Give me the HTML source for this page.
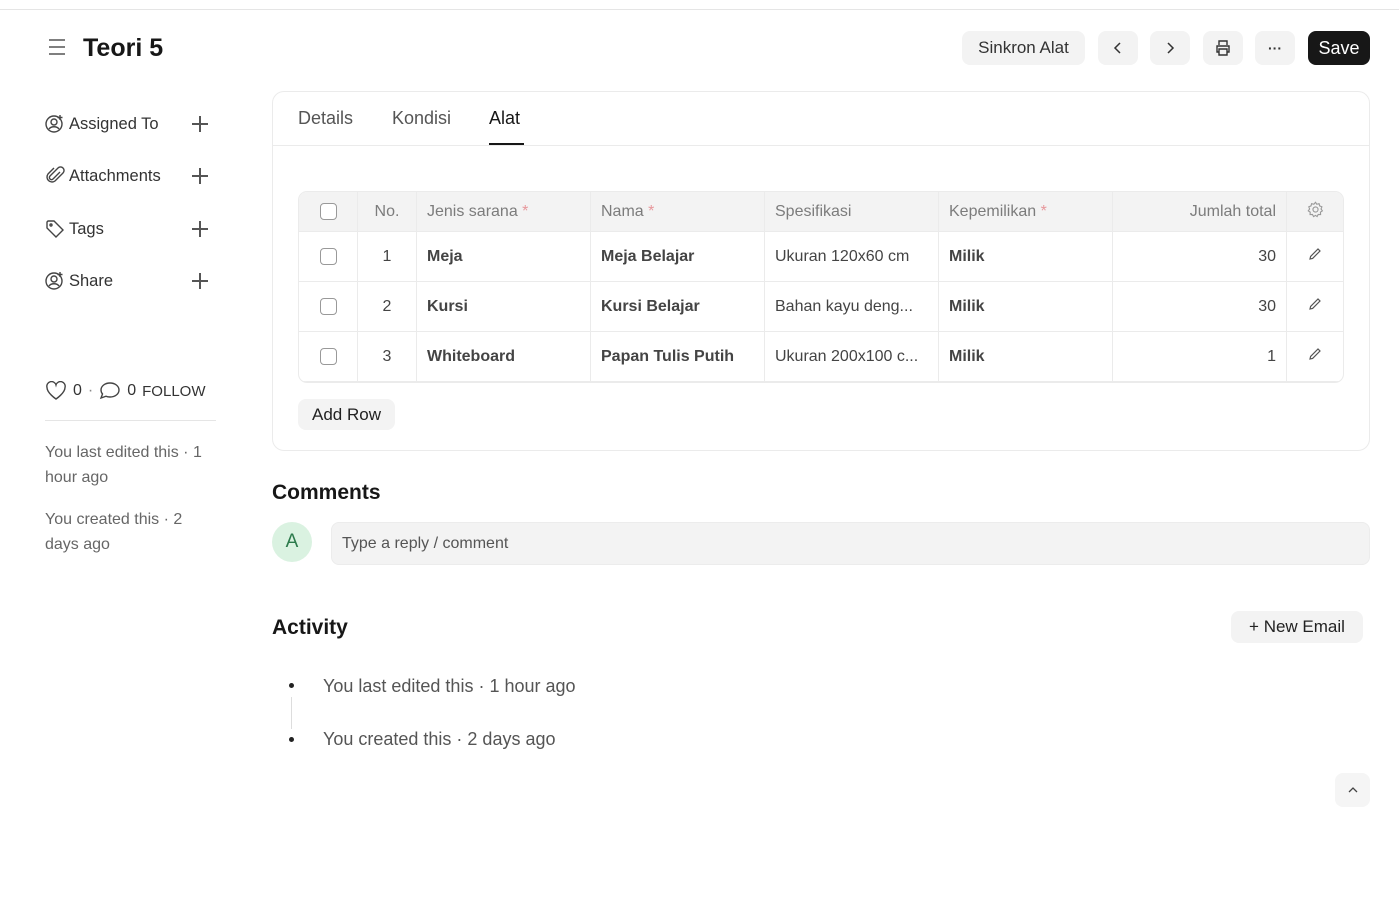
<!DOCTYPE html>
<html><head><meta charset="utf-8">
<style>
*{box-sizing:border-box;margin:0;padding:0}
body{width:1399px;height:902px;position:relative;background:#fff;font-family:"Liberation Sans",sans-serif;color:#171717;overflow:hidden}
.a{position:absolute}
.btn{position:absolute;background:#f3f3f3;border-radius:8px;display:flex;align-items:center;justify-content:center;font-size:17px;color:#333}
.side{position:absolute;left:45px;font-size:16.5px;color:#333;display:flex;align-items:center;gap:4px}
.plus{position:absolute;left:191px;width:18px;height:18px}
.plus:before{content:"";position:absolute;left:8px;top:1px;width:1.5px;height:16px;background:#555}
.plus:after{content:"";position:absolute;top:8px;left:1px;height:1.5px;width:16px;background:#555}
.tw{position:absolute;left:298px;top:191px;width:1046px;height:192px;border:1px solid #ebebeb;border-radius:9px;overflow:hidden}
table{border-collapse:collapse;width:1046px;margin:-1px;font-size:16px}
td,th{border:1px solid #ebebeb;height:50px;padding:0 10px;text-align:left}
th{height:40px;background:#f3f3f3;font-weight:normal;color:#7c7c7c}
td{font-weight:bold;color:#444}
.r{text-align:right}.c{text-align:center}
.cb{display:inline-block;width:17px;height:17px;border:1px solid #999;border-radius:4px;vertical-align:middle;background:#fff}
.req{color:#e7979b}
td.n{font-weight:normal;color:#444}
</style></head><body>
<div class="a" style="left:0;top:9px;width:1399px;height:1px;background:#e5e5e5"></div>
<svg class="a" style="left:48px;top:38px" width="18" height="18" viewBox="0 0 18 18" stroke="#555" stroke-width="1.4"><path d="M1 2h16M1 9h16M1 16h16"/></svg>
<div class="a" style="left:83px;top:34px;font-size:25px;font-weight:bold">Teori 5</div>
<div class="btn" style="left:962px;top:31px;width:123px;height:34px">Sinkron Alat</div>
<div class="btn" style="left:1098px;top:31px;width:40px;height:34px"><svg width="14" height="14" viewBox="0 0 14 14" fill="none" stroke="#333" stroke-width="1.5"><path d="M9 2L4 7l5 5"/></svg></div>
<div class="btn" style="left:1150px;top:31px;width:40px;height:34px"><svg width="14" height="14" viewBox="0 0 14 14" fill="none" stroke="#333" stroke-width="1.5"><path d="M5 2l5 5-5 5"/></svg></div>
<div class="btn" style="left:1203px;top:31px;width:40px;height:34px"><svg width="18" height="18" viewBox="0 0 18 18" fill="none" stroke="#333" stroke-width="1.4"><path d="M5 6V2h8v4M5 13H3V7h12v6h-2M5 10h8v6H5z"/></svg></div>
<div class="btn" style="left:1255px;top:31px;width:40px;height:34px;font-weight:bold;font-size:14px">···</div>
<div class="btn" style="left:1308px;top:31px;width:62px;height:34px;background:#171717;color:#fff;font-size:18px">Save</div>

<div class="side" style="top:114px"><svg width="20" height="20" viewBox="0 0 20 20" fill="none" stroke="#444" stroke-width="1.4"><circle cx="9" cy="10" r="8"/><circle cx="9" cy="8" r="3"/><path d="M4 15c2-3 8-3 10 0M15 1v5M12.5 3.5h5"/></svg>Assigned To</div>
<div class="plus" style="top:115px"></div>
<div class="side" style="top:166px"><svg width="20" height="20" viewBox="0 0 20 20" fill="none" stroke="#444" stroke-width="1.4"><path d="M15 6l-7 7a2 2 0 01-3-3l8-8a3.5 3.5 0 015 5l-8 8a5 5 0 01-7-7l6-6"/></svg>Attachments</div>
<div class="plus" style="top:167px"></div>
<div class="side" style="top:219px"><svg width="20" height="20" viewBox="0 0 20 20" fill="none" stroke="#444" stroke-width="1.4"><path d="M2 3v6l9 9 7-7-9-9H3z"/><circle cx="6" cy="6" r="1"/></svg>Tags</div>
<div class="plus" style="top:220px"></div>
<div class="side" style="top:271px"><svg width="20" height="20" viewBox="0 0 20 20" fill="none" stroke="#444" stroke-width="1.4"><circle cx="9" cy="10" r="8"/><circle cx="9" cy="8" r="3"/><path d="M4 15c2-3 8-3 10 0M15 1v5M12.5 3.5h5"/></svg>Share</div>
<div class="plus" style="top:272px"></div>

<div class="a" style="left:45px;top:381px;font-size:16px;color:#333;display:flex;align-items:center;gap:6px">
<svg width="22" height="20" viewBox="0 0 22 20" fill="none" stroke="#444" stroke-width="1.4"><path d="M11 18S2 12 2 6.5A4.5 4.5 0 0111 4a4.5 4.5 0 019 2.5C20 12 11 18 11 18z"/></svg>0 <span style="color:#888">·</span>
<svg width="22" height="20" viewBox="0 0 22 20" fill="none" stroke="#444" stroke-width="1.4"><path d="M11 2c5 0 9 3 9 7s-4 7-9 7c-1.5 0-3-.3-4-.8L2 17l1.5-4C2.5 11.8 2 10.4 2 9c0-4 4-7 9-7z"/></svg>0 <span style="font-size:15px">FOLLOW</span></div>
<div class="a" style="left:45px;top:420px;width:171px;height:1px;background:#e5e5e5"></div>
<div class="a" style="left:45px;top:440px;width:175px;font-size:16px;line-height:25px;color:#666">You last edited this · 1 hour ago</div>
<div class="a" style="left:45px;top:507px;width:175px;font-size:16px;line-height:25px;color:#666">You created this · 2 days ago</div>

<div class="a" style="left:272px;top:91px;width:1098px;height:360px;border:1px solid #ebebeb;border-radius:12px"></div>
<div class="a" style="left:273px;top:145px;width:1096px;height:1px;background:#ebebeb"></div>
<div class="a" style="left:298px;top:108px;font-size:18px;color:#555">Details</div>
<div class="a" style="left:392px;top:108px;font-size:18px;color:#555">Kondisi</div>
<div class="a" style="left:489px;top:108px;font-size:18px;color:#171717">Alat</div>
<div class="a" style="left:489px;top:143px;width:35px;height:2px;background:#171717"></div>

<div class="tw"><table>
<tr><th class="c" style="width:59px"><span class="cb"></span></th><th class="c" style="width:59px">No.</th><th style="width:174px">Jenis sarana <span class="req">*</span></th><th style="width:174px">Nama <span class="req">*</span></th><th style="width:174px">Spesifikasi</th><th style="width:174px">Kepemilikan <span class="req">*</span></th><th class="r" style="width:174px">Jumlah total</th><th class="c"><svg width="17" height="17" viewBox="0 0 20 20" fill="none" stroke="#999" stroke-width="1.3"><circle cx="10" cy="10" r="3"/><path d="M10 1.5l1.5 2.3 2.7-.7.7 2.7 2.6 1-1 2.6 1.6 2.2-2.3 1.5.2 2.8-2.8-.1-1.3 2.5L10 16.9l-2.3 1.4-1.3-2.5-2.8.1.2-2.8L1.5 11.6l1.6-2.2-1-2.6 2.6-1 .7-2.7 2.7.7z"/></svg></th></tr>
<tr><td class="c"><span class="cb"></span></td><td class="c n">1</td><td>Meja</td><td>Meja Belajar</td><td class="n">Ukuran 120x60 cm</td><td>Milik</td><td class="r n">30</td><td class="c"><svg width="14" height="14" viewBox="0 0 14 14" fill="none" stroke="#555" stroke-width="1.2"><path d="M2 12l.6-2.6L10 2l2 2-7.4 7.4z"/></svg></td></tr>
<tr><td class="c"><span class="cb"></span></td><td class="c n">2</td><td>Kursi</td><td>Kursi Belajar</td><td class="n">Bahan kayu deng...</td><td>Milik</td><td class="r n">30</td><td class="c"><svg width="14" height="14" viewBox="0 0 14 14" fill="none" stroke="#555" stroke-width="1.2"><path d="M2 12l.6-2.6L10 2l2 2-7.4 7.4z"/></svg></td></tr>
<tr><td class="c"><span class="cb"></span></td><td class="c n">3</td><td>Whiteboard</td><td>Papan Tulis Putih</td><td class="n">Ukuran 200x100 c...</td><td>Milik</td><td class="r n">1</td><td class="c"><svg width="14" height="14" viewBox="0 0 14 14" fill="none" stroke="#555" stroke-width="1.2"><path d="M2 12l.6-2.6L10 2l2 2-7.4 7.4z"/></svg></td></tr>
</table></div>
<div class="btn" style="left:298px;top:399px;width:97px;height:31px;color:#222">Add Row</div>

<div class="a" style="left:272px;top:481px;font-size:21px;font-weight:bold">Comments</div>
<div class="a" style="left:272px;top:522px;width:40px;height:40px;border-radius:50%;background:#daf2e1;color:#2b7a4b;font-size:19px;display:flex;align-items:center;justify-content:center">A</div>
<div class="a" style="left:331px;top:522px;width:1039px;height:43px;border-radius:8px;background:#f3f3f3;border:1px solid #ececec;font-size:16px;color:#555;padding:12px 10px">Type a reply / comment</div>

<div class="a" style="left:272px;top:616px;font-size:21px;font-weight:bold">Activity</div>
<div class="btn" style="left:1231px;top:611px;width:132px;height:32px;color:#222">+ New Email</div>
<div class="a" style="left:289px;top:683px;width:5px;height:5px;border-radius:50%;background:#222"></div>
<div class="a" style="left:291px;top:697px;width:1px;height:32px;background:#ddd"></div>
<div class="a" style="left:289px;top:737px;width:5px;height:5px;border-radius:50%;background:#222"></div>
<div class="a" style="left:323px;top:676px;font-size:18px;color:#555">You last edited this · 1 hour ago</div>
<div class="a" style="left:323px;top:729px;font-size:18px;color:#555">You created this · 2 days ago</div>
<div class="btn" style="left:1335px;top:773px;width:35px;height:34px;background:#f5f5f5"><svg width="12" height="12" viewBox="0 0 12 12" fill="none" stroke="#444" stroke-width="1.3"><path d="M2 8l4-4 4 4"/></svg></div>
</body></html>
